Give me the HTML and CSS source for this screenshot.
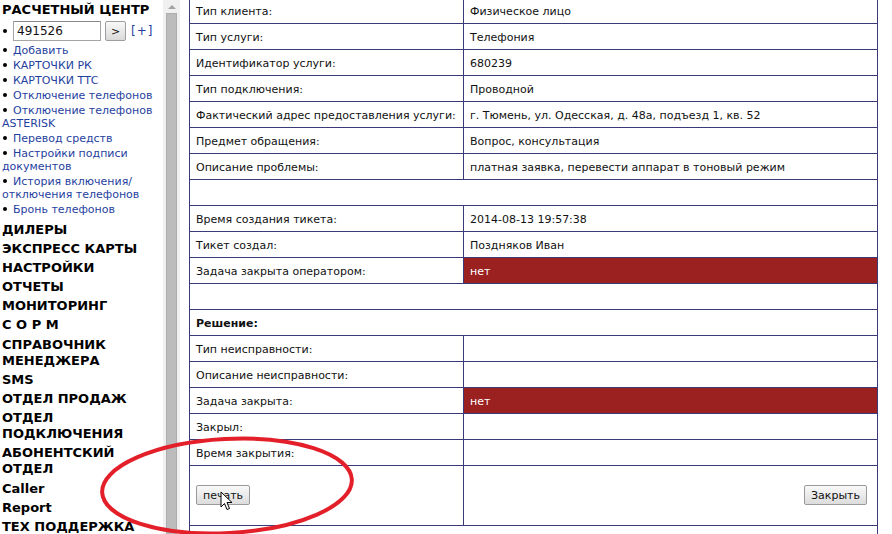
FILE: index.html
```
<!DOCTYPE html>
<html lang="ru">
<head>
<meta charset="utf-8">
<title>Тикет</title>
<link rel="stylesheet" href="styles.css">
</head>
<body>
<div class="frames">
  <div class="side">
    <div class="side-title">РАСЧЕТНЫЙ ЦЕНТР</div>
    <ul class="side-list">
      <li class="search-item"><input class="search-input" type="text" value="491526"><button class="go-btn">&gt;</button><a class="plus" href="#">[+]</a></li>
      <li><a href="#">Добавить</a></li>
      <li><a href="#">КАРТОЧКИ РК</a></li>
      <li><a href="#">КАРТОЧКИ ТТС</a></li>
      <li><a href="#">Отключение телефонов</a></li>
      <li><a href="#">Отключение телефонов ASTERISK</a></li>
      <li><a href="#">Перевод средств</a></li>
      <li><a href="#">Настройки подписи документов</a></li>
      <li><a href="#">История включения/ отключения телефонов</a></li>
      <li><a href="#">Бронь телефонов</a></li>
    </ul>
    <div class="side-head">ДИЛЕРЫ</div>
    <div class="side-head">ЭКСПРЕСС КАРТЫ</div>
    <div class="side-head">НАСТРОЙКИ</div>
    <div class="side-head">ОТЧЕТЫ</div>
    <div class="side-head">МОНИТОРИНГ</div>
    <div class="side-head">С О Р М</div>
    <div class="side-head">СПРАВОЧНИК МЕНЕДЖЕРА</div>
    <div class="side-head">SMS</div>
    <div class="side-head">ОТДЕЛ ПРОДАЖ</div>
    <div class="side-head">ОТДЕЛ ПОДКЛЮЧЕНИЯ</div>
    <div class="side-head">АБОНЕНТСКИЙ ОТДЕЛ</div>
    <div class="side-head">Caller</div>
    <div class="side-head">Report</div>
    <div class="side-head">ТЕХ ПОДДЕРЖКА</div>
  </div>
  <div class="scrollbar">
    <div class="sb-arrow"></div>
    <div class="sb-thumb"></div>
  </div>
  <div class="main">
    <table class="ticket">
      <colgroup><col class="c1"><col class="c2"></colgroup>
      <tr><td>Тип клиента:</td><td>Физическое лицо</td></tr>
      <tr><td>Тип услуги:</td><td>Телефония</td></tr>
      <tr><td>Идентификатор услуги:</td><td>680239</td></tr>
      <tr><td>Тип подключения:</td><td>Проводной</td></tr>
      <tr><td>Фактический адрес предоставления услуги:</td><td>г. Тюмень, ул. Одесская, д. 48а, подъезд 1, кв. 52</td></tr>
      <tr><td>Предмет обращения:</td><td>Вопрос, консультация</td></tr>
      <tr><td>Описание проблемы:</td><td>платная заявка, перевести аппарат в тоновый режим</td></tr>
      <tr><td colspan="2"></td></tr>
      <tr><td>Время создания тикета:</td><td>2014-08-13 19:57:38</td></tr>
      <tr><td>Тикет создал:</td><td>Поздняков Иван</td></tr>
      <tr><td>Задача закрыта оператором:</td><td class="red">нет</td></tr>
      <tr><td colspan="2"></td></tr>
      <tr><td colspan="2" class="bold">Решение:</td></tr>
      <tr><td>Тип неисправности:</td><td></td></tr>
      <tr><td>Описание неисправности:</td><td></td></tr>
      <tr><td>Задача закрыта:</td><td class="red">нет</td></tr>
      <tr><td>Закрыл:</td><td></td></tr>
      <tr><td>Время закрытия:</td><td></td></tr>
      <tr class="btn-row"><td><button class="btn">печать</button></td><td class="right"><button class="btn">Закрыть</button></td></tr>
      <tr><td colspan="2"></td></tr>
    </table>
  </div>
</div>
<svg class="mark" width="892" height="534" viewBox="0 0 892 534">
  <ellipse cx="227" cy="486" rx="125" ry="47" transform="rotate(-3 227 486)" fill="none" stroke="#e3202a" stroke-width="4"/>
</svg>
<svg class="cursor" width="14" height="22" viewBox="0 0 14 22">
  <path d="M1 1 L1 16 L4.5 12.5 L7 18.5 L9.5 17.5 L7 11.5 L12 11.5 Z" fill="#fff" stroke="#000" stroke-width="1" stroke-linejoin="round"/>
</svg>
</body>
</html>
```

FILE: styles.css
```
html, body {
  margin: 0;
  padding: 0;
  background: #fff;
}
body {
  width: 892px;
  height: 534px;
  overflow: hidden;
  position: relative;
  font-family: "DejaVu Sans", Verdana, sans-serif;
  font-size: 11px;
  color: #111;
}
.frames {
  display: flex;
  height: 534px;
}
.side {
  width: 163px;
  flex: none;
  box-sizing: border-box;
  padding: 2px 0 0 2px;
  overflow: hidden;
}
.side-title {
  font-weight: bold;
  font-size: 13px;
  line-height: 16px;
  color: #000;
}
.side-list {
  list-style: none;
  margin: 1px 0 6px;
  padding: 0;
}
.side-list li {
  line-height: 13px;
  margin-bottom: 2px;
}
.side-list li::before {
  content: "";
  display: inline-block;
  width: 4px;
  height: 4px;
  border-radius: 50%;
  background: #000;
  margin: 0 6px 0 1px;
  vertical-align: 2px;
}
.side-list a {
  color: #1f3fa0;
  text-decoration: none;
}
.side-list .search-item {
  height: 22px;
  margin: 2px 0 1.5px;
  display: flex;
  align-items: center;
}
.side-list .search-item::before {
  margin-right: 6px;
}
.search-input {
  width: 88px;
  height: 20px;
  box-sizing: border-box;
  border: 1px solid #a5a5a5;
  border-top-color: #8a8a8a;
  padding: 0 3px;
  font-family: "DejaVu Sans", Verdana, sans-serif;
  font-size: 12px;
  color: #111;
  margin: 0;
}
.go-btn {
  width: 21px;
  height: 20px;
  margin: 0 0 0 4px;
  padding: 0;
  border: 1px solid #9d9d9d;
  border-radius: 2px;
  background: linear-gradient(#f8f8f8, #dadada);
  font-family: "DejaVu Sans", Verdana, sans-serif;
  font-size: 11px;
  color: #111;
}
.side-list .plus {
  margin-left: 5px;
  font-size: 12px;
  letter-spacing: 1px;
}
.side-head {
  font-weight: bold;
  font-size: 13px;
  line-height: 16px;
  margin-bottom: 3.2px;
  color: #000;
}
.scrollbar {
  width: 17px;
  flex: none;
  background: #f0f0f0;
  display: flex;
  flex-direction: column;
  align-items: center;
}
.sb-arrow {
  width: 0;
  height: 0;
  border-left: 4px solid transparent;
  border-right: 4px solid transparent;
  border-bottom: 4px solid #a3a3a3;
  margin: 5px 0 4px;
}
.sb-thumb {
  width: 9px;
  flex: 1;
  background: #bcbcbc;
  border: 1px solid #adadad;
  border-bottom: none;
}
.main {
  flex: 1;
  padding-left: 9px;
  overflow: hidden;
}
.ticket {
  width: 688px;
  table-layout: fixed;
  border-collapse: collapse;
  margin-top: -3px;
}
.c1 { width: 274px; }
.c2 { width: 414px; }
.ticket td {
  border: 1px solid #3b3a78;
  height: 23px;
  padding: 2px 6px 0;
  line-height: 14px;
  vertical-align: middle;
  color: #111;
  white-space: nowrap;
}
.ticket td.red {
  background: #9b2020;
  color: #fff;
}
.ticket td.bold {
  font-weight: bold;
}
.ticket td.right {
  text-align: right;
  padding-right: 10px;
}
.btn-row td {
  height: 57px;
}
.btn {
  height: 20px;
  padding: 0 6px;
  border: 1px solid #9a9a9a;
  border-radius: 2px;
  background: linear-gradient(#f9f9f9, #dcdcdc);
  font-family: "DejaVu Sans", Verdana, sans-serif;
  font-size: 11px;
  color: #111;
  margin-top: -3px;
}
.mark {
  position: absolute;
  left: 0;
  top: 0;
  pointer-events: none;
}
.cursor {
  position: absolute;
  left: 220px;
  top: 491px;
  pointer-events: none;
}
```
